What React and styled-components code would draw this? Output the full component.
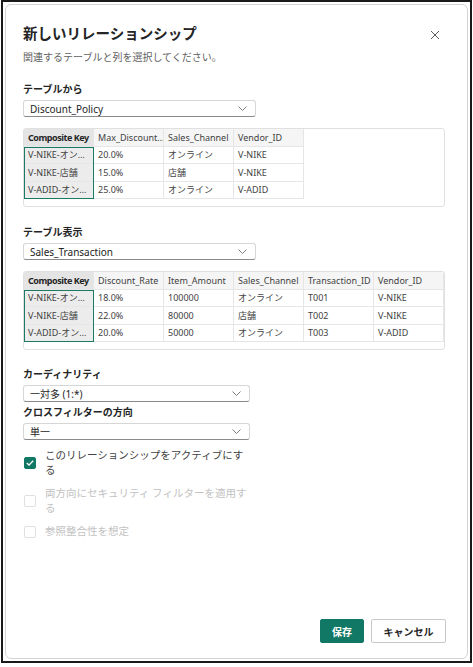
import React from "react";
import styled, { createGlobalStyle } from "styled-components";

const GlobalStyle = createGlobalStyle`
  body {
    margin: 0;
    background: #ffffff;
    font-family: "Noto Sans", "Noto Sans CJK JP", sans-serif;
    color: #242424;
  }
`;

const Page = styled.div`
  width: 473px;
  height: 667px;
  background: #ffffff;
  box-sizing: border-box;
  padding-left: 1px;
`;

const Frame = styled.div`
  width: 471px;
  height: 663px;
  box-sizing: border-box;
  border: 2px solid #1a1a1a;
  padding: 2px;
  display: flex;
`;

const Dialog = styled.div`
  flex: 1;
  display: flex;
  flex-direction: column;
  border: 1px solid #d4d4d4;
  border-radius: 6px;
  padding: 18px 21px 15px 17px;
`;

const Header = styled.div`
  display: flex;
  align-items: center;
  justify-content: space-between;
  height: 20px;
`;

const Title = styled.h1`
  margin: 0;
  font-size: 14.5px;
  font-weight: 700;
  line-height: 20px;
  color: #242424;
`;

const CloseButton = styled.button`
  border: none;
  background: none;
  padding: 0;
  margin: 4px 6px 0 0;
  width: 10px;
  height: 10px;
  display: flex;
  cursor: pointer;
`;

const Subtitle = styled.p`
  margin: 7px 0 0;
  font-size: 10px;
  line-height: 14px;
  color: #616161;
`;

const Label = styled.div`
  margin-top: ${(p) => p.$gap}px;
  font-size: 10px;
  font-weight: 700;
  line-height: 14px;
  color: #242424;
`;

const Select = styled.div`
  margin-top: 4px;
  width: ${(p) => p.$width}px;
  height: 17px;
  box-sizing: border-box;
  display: flex;
  align-items: center;
  justify-content: space-between;
  padding: 0 8px 0 6px;
  border: 1px solid #d6d6d6;
  border-bottom-color: #8a8a8a;
  border-radius: 3px;
  font-size: 10px;
  color: #242424;
`;

const PreviewBox = styled.div`
  margin-top: 11px;
  width: 422px;
  box-sizing: border-box;
  border: 1px solid #e0e0e0;
  border-radius: 3px;
  padding-bottom: 7px;
`;

const Grid = styled.div`
  position: relative;
  display: grid;
  grid-template-columns: repeat(${(p) => p.$cols}, 70px);
  grid-auto-rows: 17.5px;
  width: max-content;
`;

const Cell = styled.div`
  box-sizing: border-box;
  padding: 0 4px;
  display: flex;
  align-items: center;
  white-space: nowrap;
  overflow: hidden;
  font-size: 9px;
  border-right: 1px solid #e6e6e6;
  border-bottom: 1px solid #e6e6e6;
  background: ${(p) =>
    p.$key && p.$head ? "#e4e4e4" : p.$key ? "#ececec" : p.$head ? "#f5f5f5" : "#ffffff"};
  font-weight: ${(p) => (p.$key && p.$head ? 700 : 400)};
  letter-spacing: ${(p) => (p.$key && p.$head ? "-0.45px" : "0")};
  color: ${(p) => (p.$key && p.$head ? "#242424" : "#424242")};
`;

const KeyOutline = styled.div`
  position: absolute;
  left: 0;
  top: 17.5px;
  width: 70px;
  height: 52.5px;
  box-sizing: border-box;
  border: 1.5px solid #1b7a63;
  pointer-events: none;
`;

const Options = styled.div`
  margin-top: 8px;
  display: flex;
  flex-direction: column;
  gap: 8px;
`;

const CheckRow = styled.label`
  display: flex;
  align-items: center;
  gap: 9px;
  padding-left: 1px;
`;

const Box = styled.span`
  width: 12px;
  height: 12px;
  box-sizing: border-box;
  flex-shrink: 0;
  border-radius: 2px;
  display: flex;
  align-items: center;
  justify-content: center;
  background: ${(p) => (p.$checked ? "#117865" : "#ffffff")};
  border: 1px solid ${(p) => (p.$checked ? "#117865" : "#e0e0e0")};
`;

const CheckText = styled.span`
  width: 204px;
  font-size: 10.5px;
  line-height: 15px;
  color: ${(p) => (p.$disabled ? "#c2c2c2" : "#424242")};
`;

const Footer = styled.div`
  margin-top: auto;
  display: flex;
  justify-content: flex-end;
  gap: 7px;
`;

const Button = styled.button`
  height: 24px;
  width: ${(p) => p.$width}px;
  box-sizing: border-box;
  border-radius: 2px;
  font-family: inherit;
  font-size: 10px;
  font-weight: 700;
  padding: 0;
  cursor: pointer;
  background: ${(p) => (p.$primary ? "#117865" : "#ffffff")};
  color: ${(p) => (p.$primary ? "#ffffff" : "#242424")};
  border: 1px solid ${(p) => (p.$primary ? "#117865" : "#c8c8c8")};
`;

const Chevron = () => (
  <svg width="9" height="5" viewBox="0 0 9 5">
    <path d="M0.5 0.5 L4.5 4.5 L8.5 0.5" fill="none" stroke="#707070" strokeWidth="0.9" />
  </svg>
);

const policyTable = {
  head: ["Composite Key", "Max_Discount…", "Sales_Channel", "Vendor_ID"],
  rows: [
    ["V-NIKE-オン…", "20.0%", "オンライン", "V-NIKE"],
    ["V-NIKE-店舗", "15.0%", "店舗", "V-NIKE"],
    ["V-ADID-オン…", "25.0%", "オンライン", "V-ADID"],
  ],
};

const salesTable = {
  head: ["Composite Key", "Discount_Rate", "Item_Amount", "Sales_Channel", "Transaction_ID", "Vendor_ID"],
  rows: [
    ["V-NIKE-オン…", "18.0%", "100000", "オンライン", "T001", "V-NIKE"],
    ["V-NIKE-店舗", "22.0%", "80000", "店舗", "T002", "V-NIKE"],
    ["V-ADID-オン…", "20.0%", "50000", "オンライン", "T003", "V-ADID"],
  ],
};

const Preview = ({ data }) => (
  <PreviewBox>
    <Grid $cols={data.head.length}>
      {data.head.map((h, i) => (
        <Cell key={h} $head $key={i === 0}>
          {h}
        </Cell>
      ))}
      {data.rows.map((row, r) =>
        row.map((v, i) => (
          <Cell key={r + "-" + i} $key={i === 0}>
            {v}
          </Cell>
        ))
      )}
      <KeyOutline />
    </Grid>
  </PreviewBox>
);

const Check = ({ checked, disabled, children }) => (
  <CheckRow>
    <Box $checked={checked}>
      {checked && (
        <svg width="8" height="6" viewBox="0 0 8 6">
          <path d="M0.8 3 L3 5 L7.2 0.8" fill="none" stroke="#ffffff" strokeWidth="1.3" />
        </svg>
      )}
    </Box>
    <CheckText $disabled={disabled}>{children}</CheckText>
  </CheckRow>
);

export default function App() {
  return (
    <Page>
      <GlobalStyle />
      <Frame>
        <Dialog>
          <Header>
            <Title>新しいリレーションシップ</Title>
            <CloseButton aria-label="閉じる">
              <svg width="10" height="10" viewBox="0 0 10 10">
                <path d="M1 1 L9 9 M9 1 L1 9" stroke="#5c5c5c" strokeWidth="1" />
              </svg>
            </CloseButton>
          </Header>
          <Subtitle>関連するテーブルと列を選択してください。</Subtitle>

          <Label $gap={18}>テーブルから</Label>
          <Select $width={233}>
            <span>Discount_Policy</span>
            <Chevron />
          </Select>
          <Preview data={policyTable} />

          <Label $gap={18}>テーブル表示</Label>
          <Select $width={233}>
            <span>Sales_Transaction</span>
            <Chevron />
          </Select>
          <Preview data={salesTable} />

          <Label $gap={17}>カーディナリティ</Label>
          <Select $width={227}>
            <span>一対多 (1:*)</span>
            <Chevron />
          </Select>
          <Label $gap={3}>クロスフィルターの方向</Label>
          <Select $width={227}>
            <span>単一</span>
            <Chevron />
          </Select>

          <Options>
            <Check checked>このリレーションシップをアクティブにする</Check>
            <Check disabled>両方向にセキュリティ フィルターを適用する</Check>
            <Check disabled>参照整合性を想定</Check>
          </Options>

          <Footer>
            <Button $primary $width={44}>保存</Button>
            <Button $width={75}>キャンセル</Button>
          </Footer>
        </Dialog>
      </Frame>
    </Page>
  );
}
